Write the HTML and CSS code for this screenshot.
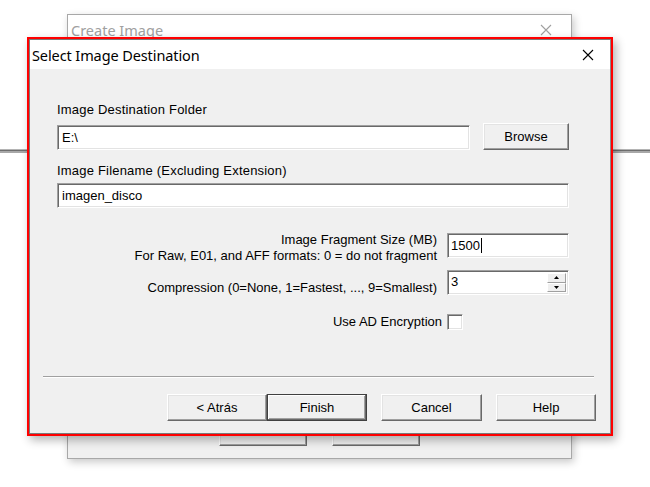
FILE: index.html
```html
<!DOCTYPE html>
<html>
<head>
<meta charset="utf-8">
<link rel="stylesheet" href="styles.css">
</head>
<body>
<div class="desktop">
  <div class="hline"></div>

  <div class="bgwin">
    <div class="bg-title">
      <span class="bg-title-text">Create Image</span>
      <svg class="bg-close" width="12" height="12" viewBox="0 0 12 12"><path d="M1 1L11 11M11 1L1 11" stroke="#a0a0a0" stroke-width="1.1" fill="none"/></svg>
    </div>
    <div class="bg-body">
      <div class="bg-footer">
        <div class="btn bg-btn"></div>
        <div class="btn bg-btn"></div>
      </div>
    </div>
  </div>

  <div class="frame">
    <div class="dlg">
      <div class="titlebar">
        <span class="title">Select Image Destination</span>
        <svg class="close" width="12" height="12" viewBox="0 0 12 12"><path d="M1 1L11 11M11 1L1 11" stroke="#000" stroke-width="1.1" fill="none"/></svg>
      </div>
      <div class="body">
        <div class="content">
          <div class="label">Image Destination Folder</div>
          <div class="row-folder">
            <div class="input folder-input">E:\</div>
            <div class="btn browse">Browse</div>
          </div>
          <div class="label label-gap">Image Filename (Excluding Extension)</div>
          <div class="input name-input">imagen_disco</div>

          <div class="opts">
            <div class="opt-label two-line">Image Fragment Size (MB)<br>For Raw, E01, and AFF formats: 0 = do not fragment</div>
            <div class="input opt-input frag-input">1500<span class="caret"></span></div>
            <div class="opt-label comp-label">Compression (0=None, 1=Fastest, ..., 9=Smallest)</div>
            <div class="input opt-input spin-input">
              <span class="spin-val">3</span>
              <div class="spin">
                <div class="spin-btn"><svg width="5" height="3" viewBox="0 0 5 3"><path d="M2.5 0L5 3H0Z" fill="#000"/></svg></div>
                <div class="spin-btn"><svg width="5" height="3" viewBox="0 0 5 3"><path d="M0 0H5L2.5 3Z" fill="#000"/></svg></div>
              </div>
            </div>
          </div>

          <div class="enc-row">
            <span class="enc-label">Use AD Encryption</span>
            <span class="checkbox"></span>
          </div>
        </div>

        <div class="footer">
          <div class="separator"></div>
          <div class="buttons">
            <div class="btn fbtn">&lt; Atrás</div>
            <div class="btn fbtn default">Finish</div>
            <div class="btn fbtn gap wide">Cancel</div>
            <div class="btn fbtn gap">Help</div>
          </div>
        </div>
      </div>
    </div>
  </div>
</div>
</body>
</html>
```

FILE: styles.css
```css
html, body {
  margin: 0;
  padding: 0;
  background: #ffffff;
}
.desktop {
  position: relative;
  width: 650px;
  height: 487px;
  overflow: hidden;
  background: #ffffff;
  font-family: "Liberation Sans", Arial, sans-serif;
  font-size: 13px;
  color: #000;
}
.hline {
  position: absolute;
  left: 0;
  right: 0;
  top: 149px;
  height: 1px;
  background: #b4b4b4;
  border-bottom: 1px solid #6e6e6e;
  box-shadow: 0 2px 0 #a8a8a8;
}

/* background window */
.bgwin {
  position: absolute;
  left: 67px;
  top: 14px;
  width: 505px;
  height: 445px;
  box-sizing: border-box;
  border: 1px solid #a8a8a8;
  background: #f0f0f0;
  display: flex;
  flex-direction: column;
  box-shadow: 2px 3px 8px rgba(0,0,0,0.22);
}
.bg-title {
  height: 30px;
  background: #fff;
  display: flex;
  align-items: center;
  justify-content: space-between;
  padding: 0 19px 0 3px;
  flex: none;
}
.bg-title-text {
  font-family: "Noto Sans", "Open Sans", sans-serif;
  font-size: 14.5px;
  color: #a0a0a0;
}
.bg-body {
  flex: 1;
  display: flex;
  flex-direction: column;
  justify-content: flex-end;
}
.bg-footer {
  display: flex;
  gap: 25px;
  padding: 0 0 12px 151px;
}
.bg-btn {
  width: 88px;
  height: 24px;
}

/* front dialog */
.frame {
  position: absolute;
  left: 27px;
  top: 37px;
  width: 586px;
  height: 399px;
  box-sizing: border-box;
  border: 2px solid #ff0000;
  box-shadow: 3px 4px 9px rgba(0,0,0,0.3);
  background: #f0f0f0;
}
.dlg {
  height: 100%;
  box-sizing: border-box;
  border: 1px solid #7a7a7a;
  border-right-color: #8a8a8a;
  display: flex;
  flex-direction: column;
}
.titlebar {
  height: 29px;
  flex: none;
  background: #ffffff;
  display: flex;
  align-items: center;
  justify-content: space-between;
  padding: 0 16px 0 2px;
}
.title {
  font-family: "Noto Sans", "Open Sans", sans-serif;
  font-size: 14.5px;
  color: #000;
  letter-spacing: -0.1px;
}
.close {
  display: block;
}
.body {
  flex: 1;
  display: flex;
  flex-direction: column;
  background: #f0f0f0;
}
.content {
  flex: 1;
  padding: 33px 41px 0 27px;
}
.label {
  line-height: 15px;
  height: 15px;
  letter-spacing: 0.2px;
}
.label-gap {
  margin-top: 13px;
}
.row-folder {
  display: flex;
  align-items: flex-end;
  gap: 13px;
  margin-top: 6px;
}
.input {
  box-sizing: border-box;
  background: #fff;
  border: 1px solid;
  border-color: #a0a0a0 #ffffff #ffffff #a0a0a0;
  box-shadow: inset 1px 1px 0 #696969, inset -1px -1px 0 #e3e3e3;
  padding: 0 4px;
  display: flex;
  align-items: center;
  line-height: 15px;
}
.folder-input {
  width: 413px;
  height: 25px;
}
.name-input {
  height: 25px;
  margin-top: 5px;
}
.btn {
  box-sizing: border-box;
  background: #f0f0f0;
  border: 1px solid;
  border-color: #ffffff #696969 #696969 #ffffff;
  box-shadow: inset -1px -1px 0 #a0a0a0, inset 1px 1px 0 #e3e3e3;
  display: flex;
  align-items: center;
  justify-content: center;
  line-height: 15px;
}
.browse {
  width: 86px;
  height: 27px;
}

.opts {
  display: grid;
  grid-template-columns: 1fr 122px;
  column-gap: 10px;
  margin-top: 24px;
}
.opt-label {
  text-align: right;
  line-height: 16px;
}
.two-line {
  height: 32px;
}
.comp-label {
  margin-top: 14px;
  padding-top: 2px;
}
.opt-input {
  height: 25px;
  margin-top: 1px;
}
.frag-input {
  margin-top: 1px;
  padding-left: 3px;
}
.caret {
  display: inline-block;
  width: 1px;
  height: 15px;
  background: #000;
  margin-left: 1px;
}
.spin-input {
  margin-top: 6px;
  padding: 2px 2px 2px 3px;
  align-items: stretch;
  justify-content: space-between;
}
.spin-val {
  display: flex;
  align-items: center;
  margin-top: -3px;
}
.spin {
  width: 19px;
  display: flex;
  flex-direction: column;
}
.spin-btn {
  flex: 1;
  box-sizing: border-box;
  background: #f0f0f0;
  border: 1px solid;
  border-color: #ffffff #a0a0a0 #a0a0a0 #ffffff;
  display: flex;
  align-items: center;
  justify-content: center;
}
.spin-btn svg {
  display: block;
}

.enc-row {
  display: flex;
  justify-content: flex-end;
  align-items: center;
  gap: 5px;
  margin-top: 18px;
  margin-right: 106px;
}
.enc-label {
  line-height: 16px;
}
.checkbox {
  width: 16px;
  height: 16px;
  box-sizing: border-box;
  background: #fff;
  border: 1px solid;
  border-color: #a0a0a0 #ffffff #ffffff #a0a0a0;
  box-shadow: inset 1px 1px 0 #696969, inset -1px -1px 0 #e3e3e3;
}

.footer {
  flex: none;
  padding: 0 14px 12px 13px;
}
.separator {
  height: 1px;
  background: #a0a0a0;
  border-bottom: 1px solid #ffffff;
  margin-right: 2px;
}
.buttons {
  display: flex;
  justify-content: flex-end;
  margin-top: 16px;
}
.fbtn {
  width: 100px;
  height: 27px;
}
.fbtn.wide {
  width: 101px;
}
.fbtn.gap {
  margin-left: 14px;
}
.fbtn.default {
  border: 1px solid #404040;
  box-shadow: inset -1px -1px 0 #696969, inset 1px 1px 0 #ffffff, inset -2px -2px 0 #a0a0a0;
}
```
